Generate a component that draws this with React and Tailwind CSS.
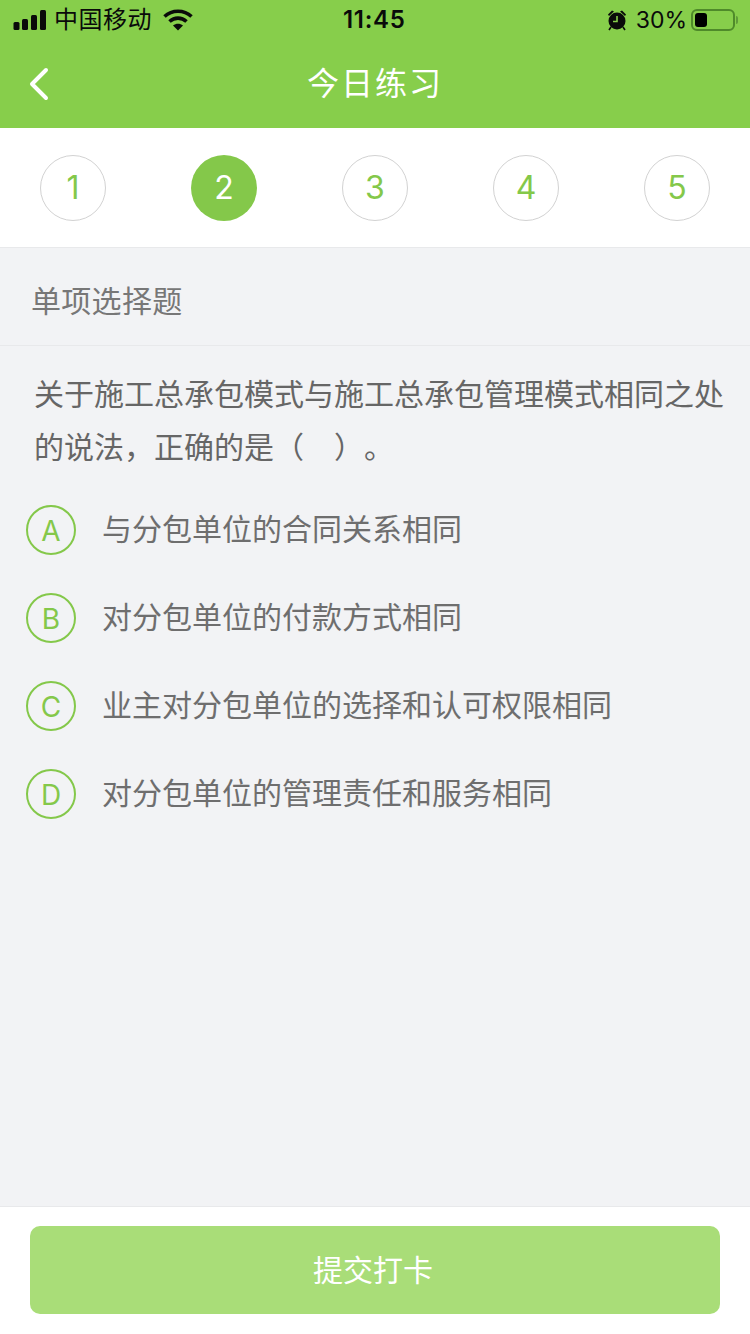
const CJK = "font-['Inter','Noto_Sans_CJK_SC',sans-serif]";
const STEPS = [1, 2, 3, 4, 5];
const OPTIONS = [
  { key: 'A', text: '与分包单位的合同关系相同' },
  { key: 'B', text: '对分包单位的付款方式相同' },
  { key: 'C', text: '业主对分包单位的选择和认可权限相同' },
  { key: 'D', text: '对分包单位的管理责任和服务相同' },
];

function StatusBar() {
  return (
    <div className="relative flex h-10 items-center justify-between pl-[13px] pr-[12px] text-[#0a0a0a]">
      <div className="flex items-center">
        <svg width="34" height="20" viewBox="0 0 34 20" fill="#0a0a0a">
          <rect x="0.5" y="12" width="6" height="8" rx="1.5" />
          <rect x="9" y="9" width="6" height="11" rx="1.5" />
          <rect x="18" y="5" width="6" height="15" rx="1.5" />
          <rect x="27" y="0" width="6" height="20" rx="1.5" />
        </svg>
        <span className="ml-[7px] text-[24px] leading-none tracking-[0.5px]">中国移动</span>
        <svg className="ml-[11px]" width="30" height="22" viewBox="0 0 30 22" fill="none" stroke="#0a0a0a" strokeWidth="3.6">
          <path d="M1.5 7.5 C9 0.5 21 0.5 28.5 7.5" />
          <path d="M6.5 12.5 C11.5 8 18.5 8 23.5 12.5" />
          <path d="M15 21.5 L10 16.5 C13 14 17 14 20 16.5 Z" fill="#0a0a0a" stroke="none" />
        </svg>
      </div>
      <span className="absolute left-[343px] top-[6px] text-[24px] font-semibold leading-[28px] tracking-[0.7px]">11:45</span>
      <div className="flex items-center">
        <svg width="22" height="22" viewBox="0 0 22 22" fill="#0a0a0a">
          <circle cx="11" cy="12" r="8.5" />
          <path d="M2 5.5 L6 1.5 L8 2.5 L3 7 Z M20 5.5 L16 1.5 L14 2.5 L19 7 Z" />
          <path d="M11 7 V12.5 H7" fill="none" stroke="#87ce4b" strokeWidth="1.6" />
          <path d="M5 18 L3 21 M17 18 L19 21" stroke="#0a0a0a" strokeWidth="1.6" />
        </svg>
        <span className="ml-[8px] text-[23px] leading-none">30%</span>
        <div className="ml-[4px] flex h-[22px] w-[44px] items-center rounded-[6px] border-2 border-[#4f8a2a] p-[2px]">
          <div className="h-full w-[12px] rounded-[3px] bg-black" />
        </div>
        <div className="ml-[1px] h-[8px] w-[2px] rounded-r-full bg-[#5f9a38]" />
      </div>
    </div>
  );
}

function Header() {
  return (
    <div className="relative flex h-[88px] items-center justify-center bg-[#87ce4b] pb-[1px]">
      <svg className="absolute left-[28px] top-[27px]" width="22" height="34" viewBox="0 0 22 34" fill="none" stroke="#ffffff" strokeWidth="4" strokeLinecap="round" strokeLinejoin="round">
        <path d="M18 3 L4 17 L18 31" />
      </svg>
      <span className="text-[32px] leading-none tracking-[2px] text-white">今日练习</span>
    </div>
  );
}

function Steps() {
  return (
    <div className="flex h-[120px] items-center justify-between border-b border-[#e8e9eb] bg-white pl-[40px] pr-[40px]">
      {STEPS.map((n) =>
        n === 2 ? (
          <div key={n} className="flex size-[66px] items-center justify-center rounded-full bg-[#84c84a] text-[32px] text-white">
            {n}
          </div>
        ) : (
          <div key={n} className="flex size-[66px] items-center justify-center rounded-full border border-[#d2d2d2] text-[32px] text-[#84c84a]">
            {n}
          </div>
        ),
      )}
    </div>
  );
}

export default function App() {
  return (
    <div className={`flex h-[1334px] w-[750px] flex-col overflow-hidden bg-[#f2f3f5] ${CJK}`}>
      <div className="bg-[#87ce4b]">
        <StatusBar />
        <Header />
      </div>
      <Steps />

      <div className="flex h-[98px] items-center border-b border-[#e8e9eb] pl-[31px] pt-[9px] text-[30px] leading-none tracking-[0.3px] text-[#777777]">
        单项选择题
      </div>

      <p className="pl-[34px] pr-[20px] pt-[22px] text-[30px] leading-[53px] text-[#666666] [text-spacing-trim:space-all]">
        关于施工总承包模式与施工总承包管理模式相同之处的说法，正确的是（　）。
      </p>

      <div className="flex flex-col gap-[38px] pl-[26px] pt-[31px]">
        {OPTIONS.map((o) => (
          <div key={o.key} className="flex h-[50px] items-center">
            <div className="flex size-[50px] items-center justify-center rounded-full border-2 border-[#84c84a] pt-[2px] text-[28px] text-[#84c84a]">
              {o.key}
            </div>
            <span className="ml-[26px] pb-[2px] text-[30px] leading-none text-[#6e6e6e]">{o.text}</span>
          </div>
        ))}
      </div>

      <div className="mt-auto flex h-[128px] border-t border-[#e8e9eb] bg-white pl-[30px] pr-[30px] pt-[19px]">
        <button className="flex h-[88px] w-full items-center justify-center rounded-[10px] bg-[#a9dd78] pr-[4px] text-[30px] text-white">
          提交打卡
        </button>
      </div>
    </div>
  );
}
